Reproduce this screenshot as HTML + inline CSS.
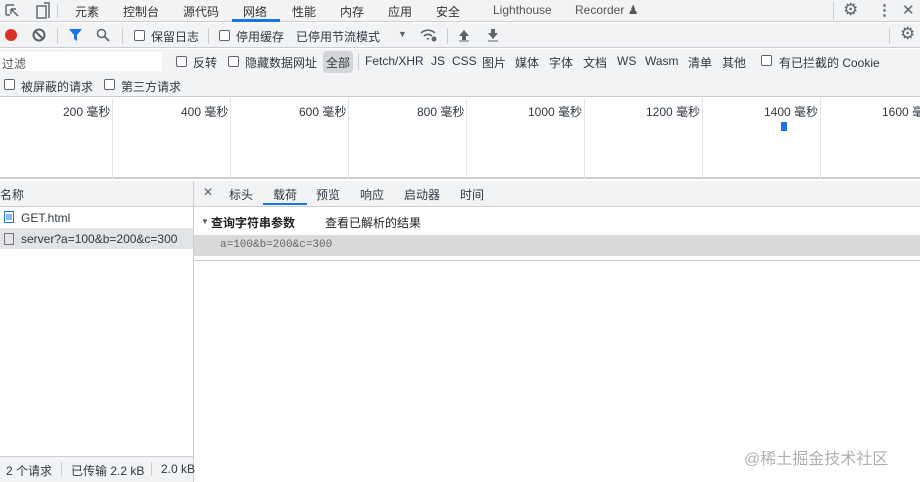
<!DOCTYPE html>
<html><head><meta charset="utf-8"><style>
*{box-sizing:border-box;margin:0;padding:0}
body{width:920px;height:482px;overflow:hidden;background:#fff;font-family:"Liberation Sans","Noto Sans CJK SC",sans-serif;font-size:12px;color:#303942;position:relative}
.a{position:absolute;white-space:nowrap}
.cb{position:absolute;width:11px;height:11px;border:1px solid #5f6368;border-radius:2px;background:#fff}
.vl{position:absolute;width:1px;background:#ccc}
</style></head><body>
<div class="a" style="left:0;top:0;width:920px;height:22px;background:#f1f3f4;border-bottom:1px solid #cbcdd1"></div>
<svg class="a" style="left:4px;top:2px" width="50" height="18"><path d="M2 3h8M2 3v10M2 13h4M7 7l7 7M7 7h5M7 7v5" stroke="#5f6368" stroke-width="1.4" fill="none"/><rect x="33" y="4" width="9" height="12" fill="none" stroke="#5f6368" stroke-width="1.4"/><path d="M40 1h5v15" stroke="#5f6368" stroke-width="1.4" fill="none"/></svg>
<div class="vl" style="left:57px;top:4px;height:14px"></div>
<div class="a" style="left:75px;top:3px;color:#333">元素</div>
<div class="a" style="left:123px;top:3px;color:#333">控制台</div>
<div class="a" style="left:183px;top:3px;color:#333">源代码</div>
<div class="a" style="left:243px;top:3px;color:#333">网络</div>
<div class="a" style="left:232px;top:19px;width:48px;height:3px;background:#1a73e8"></div>
<div class="a" style="left:292px;top:3px;color:#333">性能</div>
<div class="a" style="left:340px;top:3px;color:#333">内存</div>
<div class="a" style="left:388px;top:3px;color:#333">应用</div>
<div class="a" style="left:436px;top:3px;color:#333">安全</div>
<div class="a" style="left:493px;top:3px;color:#555">Lighthouse</div>
<div class="a" style="left:575px;top:3px;color:#555">Recorder ♟</div>
<div class="vl" style="left:833px;top:2px;height:18px"></div>
<div class="a" style="left:843px;top:0px;font-size:17px;color:#5f6368">⚙</div>
<div class="a" style="left:877px;top:1px;font-size:15px;color:#5f6368;font-weight:bold">⋮</div>
<div class="a" style="left:902px;top:1px;font-size:15px;color:#5f6368">✕</div>
<div class="a" style="left:0;top:23px;width:920px;height:25px;background:#f1f3f4;border-bottom:1px solid #cbcdd1"></div>
<div class="a" style="left:5px;top:29px;width:12px;height:12px;border-radius:50%;background:#d93025"></div>
<svg class="a" style="left:32px;top:28px" width="14" height="14"><circle cx="7" cy="7" r="5.5" fill="none" stroke="#5f6368" stroke-width="2"/><path d="M3 3l8 8" stroke="#5f6368" stroke-width="2"/></svg>
<div class="vl" style="left:57px;top:28px;height:16px"></div>
<svg class="a" style="left:68px;top:28px" width="15" height="14"><path d="M1 1h13l-5 6v6l-3-2v-4z" fill="#1a73e8"/></svg>
<svg class="a" style="left:96px;top:28px" width="14" height="14"><circle cx="5.5" cy="5.5" r="4" fill="none" stroke="#5f6368" stroke-width="1.5"/><path d="M8.5 8.5l4.5 4.5" stroke="#5f6368" stroke-width="1.8"/></svg>
<div class="vl" style="left:122px;top:28px;height:16px"></div>
<div class="cb" style="left:134px;top:30px"></div><div class="a" style="left:151px;top:28px">保留日志</div>
<div class="vl" style="left:208px;top:28px;height:16px"></div>
<div class="cb" style="left:219px;top:30px"></div><div class="a" style="left:236px;top:28px">停用缓存</div>
<div class="a" style="left:296px;top:28px">已停用节流模式</div>
<div class="a" style="left:398px;top:29px;font-size:9px;color:#5f6368">▼</div>
<svg class="a" style="left:420px;top:27px" width="18" height="16"><path d="M1 6a10 10 0 0 1 14 0M4 9a6 6 0 0 1 8 0M7 12a2 2 0 0 1 2 0" stroke="#5f6368" stroke-width="1.6" fill="none"/><circle cx="14" cy="12" r="2.5" fill="#5f6368"/></svg>
<div class="vl" style="left:447px;top:28px;height:16px"></div>
<svg class="a" style="left:458px;top:29px" width="12" height="13"><path d="M6 1l5 6H8v4H4V7H1z" fill="#5f6368"/><path d="M1 12h10" stroke="#5f6368"/></svg>
<svg class="a" style="left:487px;top:29px" width="12" height="13"><path d="M6 10l5-6H8V0H4v4H1z" fill="#5f6368"/><path d="M1 12h10" stroke="#5f6368"/></svg>
<div class="vl" style="left:889px;top:28px;height:16px"></div>
<div class="a" style="left:900px;top:24px;font-size:17px;color:#5f6368">⚙</div>
<div class="a" style="left:0;top:49px;width:920px;height:48px;background:#f1f3f4;border-bottom:1px solid #cbcdd1"></div>
<div class="a" style="left:0;top:52px;width:162px;height:19px;background:#fff"></div>
<div class="a" style="left:2px;top:55px;color:#555">过滤</div>
<div class="cb" style="left:176px;top:56px"></div><div class="a" style="left:193px;top:54px">反转</div>
<div class="cb" style="left:228px;top:56px"></div><div class="a" style="left:245px;top:54px">隐藏数据网址</div>
<div class="a" style="left:323px;top:51px;width:30px;height:22px;background:#d3d5d8;border-radius:4px"></div>
<div class="a" style="left:326px;top:54px">全部</div>
<div class="vl" style="left:358px;top:54px;height:16px"></div>
<div class="a" style="left:365px;top:54px">Fetch/XHR</div>
<div class="a" style="left:431px;top:54px">JS</div>
<div class="a" style="left:452px;top:54px">CSS</div>
<div class="a" style="left:482px;top:54px">图片</div>
<div class="a" style="left:515px;top:54px">媒体</div>
<div class="a" style="left:549px;top:54px">字体</div>
<div class="a" style="left:583px;top:54px">文档</div>
<div class="a" style="left:617px;top:54px">WS</div>
<div class="a" style="left:645px;top:54px">Wasm</div>
<div class="a" style="left:688px;top:54px">清单</div>
<div class="a" style="left:722px;top:54px">其他</div>
<div class="cb" style="left:761px;top:55px"></div><div class="a" style="left:779px;top:54px">有已拦截的 Cookie</div>
<div class="cb" style="left:4px;top:79px"></div><div class="a" style="left:21px;top:78px">被屏蔽的请求</div>
<div class="cb" style="left:104px;top:79px"></div><div class="a" style="left:121px;top:78px">第三方请求</div>
<div class="a" style="left:0;top:98px;width:920px;height:81px;background:#fff;border-bottom:2px solid #cbcdd1"></div>
<div class="vl" style="left:112px;top:98px;height:81px;background:#e5e5e5"></div>
<div class="vl" style="left:230px;top:98px;height:81px;background:#e5e5e5"></div>
<div class="vl" style="left:348px;top:98px;height:81px;background:#e5e5e5"></div>
<div class="vl" style="left:466px;top:98px;height:81px;background:#e5e5e5"></div>
<div class="vl" style="left:584px;top:98px;height:81px;background:#e5e5e5"></div>
<div class="vl" style="left:702px;top:98px;height:81px;background:#e5e5e5"></div>
<div class="vl" style="left:820px;top:98px;height:81px;background:#e5e5e5"></div>
<div class="a" style="left:63px;top:103px">200 毫秒</div>
<div class="a" style="left:181px;top:103px">400 毫秒</div>
<div class="a" style="left:299px;top:103px">600 毫秒</div>
<div class="a" style="left:417px;top:103px">800 毫秒</div>
<div class="a" style="left:528px;top:103px">1000 毫秒</div>
<div class="a" style="left:646px;top:103px">1200 毫秒</div>
<div class="a" style="left:764px;top:103px">1400 毫秒</div>
<div class="a" style="left:882px;top:103px">1600 毫秒</div>
<div class="a" style="left:781px;top:122px;width:6px;height:9px;background:#1a73e8"></div>
<div class="a" style="left:0;top:181px;width:193px;height:26px;background:#f1f3f4;border-bottom:1px solid #cbcdd1"></div>
<div class="a" style="left:0;top:186px">名称</div>
<div class="vl" style="left:193px;top:181px;height:301px;background:#cbcdd1"></div>
<svg class="a" style="left:4px;top:211px" width="10" height="12"><rect x="0.5" y="0.5" width="9" height="11" fill="none" stroke="#1a73e8"/><path d="M2 4h6M2 6h6M2 8h6" stroke="#1a73e8"/></svg>
<div class="a" style="left:21px;top:211px">GET.html</div>
<div class="a" style="left:0;top:228px;width:193px;height:21px;background:#e2e3e6"></div>
<div class="a" style="left:4px;top:233px;width:10px;height:12px;border:1px solid #777"></div>
<div class="a" style="left:21px;top:232px">server?a=100&amp;b=200&amp;c=300</div>
<div class="a" style="left:0;top:456px;width:193px;height:26px;background:#f1f3f4;border-top:1px solid #cbcdd1"></div>
<div class="a" style="left:6px;top:462px">2 个请求</div>
<div class="vl" style="left:61px;top:462px;height:14px"></div>
<div class="a" style="left:71px;top:462px">已传输 2.2 kB</div>
<div class="vl" style="left:151px;top:462px;height:14px"></div>
<div class="a" style="left:161px;top:462px">2.0 kB</div>
<div class="a" style="left:194px;top:181px;width:726px;height:26px;background:#f1f3f4;border-bottom:1px solid #cbcdd1"></div>
<div class="a" style="left:203px;top:185px;color:#5f6368">✕</div>
<div class="a" style="left:229px;top:186px">标头</div>
<div class="a" style="left:273px;top:186px">载荷</div>
<div class="a" style="left:263px;top:203px;width:44px;height:2px;background:#1a73e8"></div>
<div class="a" style="left:316px;top:186px">预览</div>
<div class="a" style="left:360px;top:186px">响应</div>
<div class="a" style="left:404px;top:186px">启动器</div>
<div class="a" style="left:460px;top:186px">时间</div>
<div class="a" style="left:201px;top:217px;font-size:8px;color:#555">▼</div>
<div class="a" style="left:211px;top:214px;font-weight:bold;color:#222">查询字符串参数</div>
<div class="a" style="left:325px;top:214px;color:#222">查看已解析的结果</div>
<div class="a" style="left:194px;top:235px;width:726px;height:21px;background:#dadada"></div>
<div class="a" style="left:220px;top:239px;font-family:'Liberation Mono',monospace;font-size:11px;color:#666">a=100&amp;b=200&amp;c=300</div>
<div class="a" style="left:194px;top:260px;width:726px;height:1px;background:#cbcdd1"></div>
<div class="a" style="left:744px;top:445px;font-size:16px;color:#b0b0b0">@稀土掘金技术社区</div>
</body></html>
